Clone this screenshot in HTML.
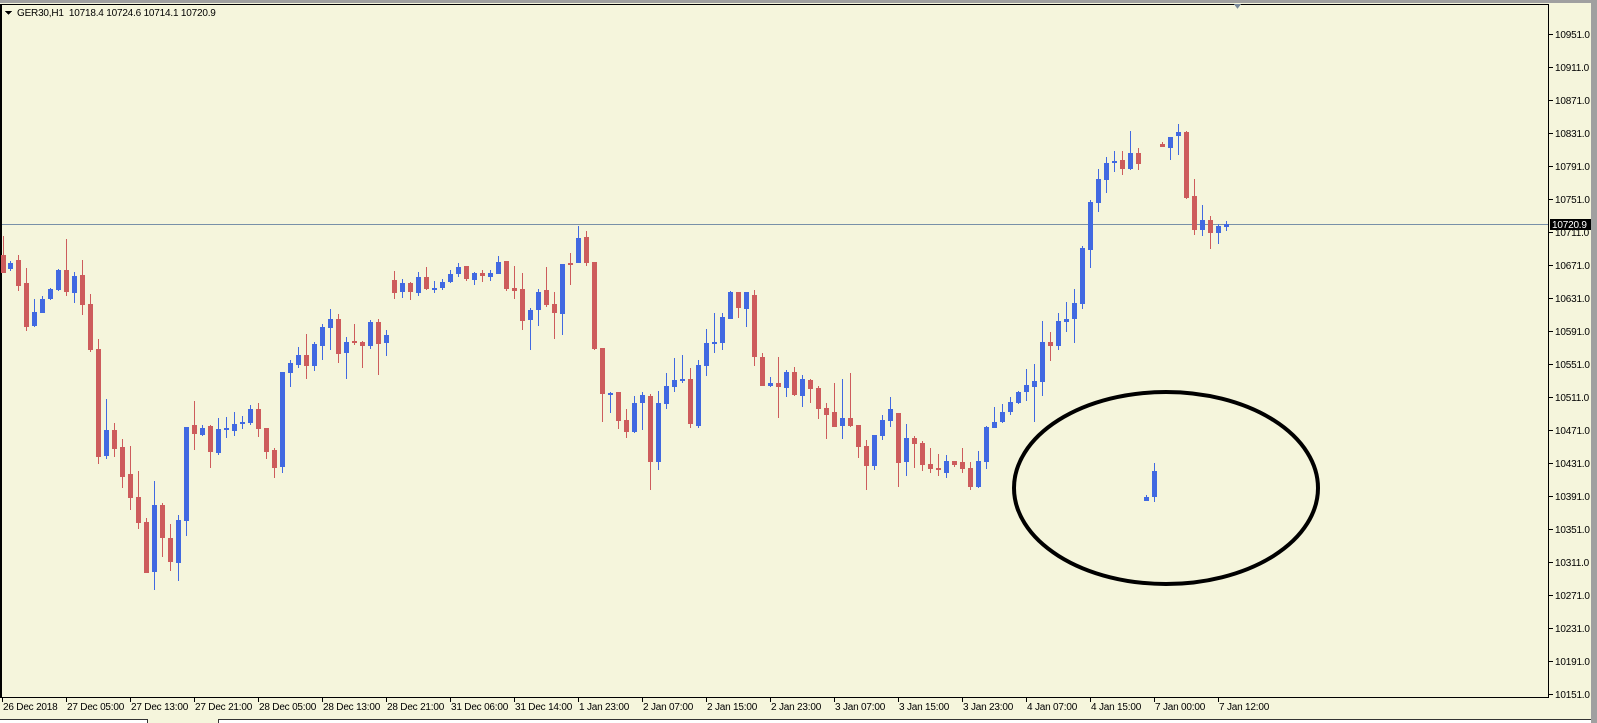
<!DOCTYPE html>
<html><head><meta charset="utf-8">
<style>
html,body{margin:0;padding:0;width:1597px;height:723px;overflow:hidden;background:#F5F5DC;}
svg{display:block;font-family:"Liberation Sans",sans-serif;font-size:10px;letter-spacing:-0.2px;}
</style></head>
<body>
<svg width="1597" height="723" viewBox="0 0 1597 723" xmlns="http://www.w3.org/2000/svg" shape-rendering="crispEdges">
<rect x="0" y="0" width="1597" height="723" fill="#F5F5DC"/>
<rect x="0" y="0" width="1597" height="3" fill="#A0A0A0"/>
<rect x="1591" y="0" width="6" height="723" fill="#A0A0A0"/>
<rect x="0" y="4" width="1549" height="1" fill="#000"/>
<rect x="0" y="4" width="2" height="694" fill="#000"/>
<rect x="1548" y="4" width="1" height="694" fill="#000"/>
<rect x="0" y="697" width="1549" height="1" fill="#000"/>
<polygon points="1234,4 1241,4 1237.5,9" fill="#7A8A9A"/>
<polygon points="5,11 12,11 8.5,15" fill="#000"/>
<text x="17" y="16" fill="#000">GER30,H1&#160; 10718.4 10724.6 10714.1 10720.9</text>
<rect x="2" y="224" width="1546" height="1" fill="#7890A8"/>
<g id="candles"></g>
<g id="price"></g>
<g id="time"></g>
<ellipse cx="1166" cy="488" rx="152" ry="96" fill="none" stroke="#000" stroke-width="4" shape-rendering="auto"/>
<rect x="1550" y="219" width="41" height="11" fill="#000"/>
<text x="1552" y="228" fill="#fff">10720.9</text>
<rect x="0" y="719" width="148" height="4" fill="#fff"/>
<rect x="0" y="719" width="148" height="1" fill="#333"/>
<rect x="147" y="719" width="1" height="4" fill="#333"/>
<rect x="218" y="719" width="1373" height="4" fill="#fff"/>
<rect x="218" y="719" width="1373" height="1" fill="#333"/>
<rect x="218" y="719" width="1" height="4" fill="#333"/>
</svg>
<script>
var D=[
[0,'r',255,273,236,273],[1,'b',263,269,261,271],[2,'r',260,286,255,291],[3,'r',283,327,268,331],[4,'b',312,326,299,327],[5,'b',299,313,296,313],[6,'b',289,299,288,300],[7,'b',270,290,269,291],[8,'r',270,292,239,296],[9,'b',276,293,272,303],[10,'r',275,305,260,315],[11,'r',304,350,294,352],[12,'r',349,457,339,464],[13,'b',430,456,399,459],[14,'r',430,449,423,457],[15,'r',447,477,439,488],[16,'r',474,498,446,510],[17,'r',497,523,471,529],[18,'r',522,573,518,573],[19,'b',505,572,481,590],[20,'r',505,538,503,557],[21,'r',538,562,524,571],[22,'b',520,563,515,581],[23,'b',427,521,427,536],[24,'r',425,434,401,450],[25,'b',428,435,425,436],[26,'r',426,452,425,468],[27,'b',429,453,418,455],[28,'b',428,430,417,438],[29,'b',424,431,412,436],[30,'b',422,424,416,429],[31,'b',409,423,405,425],[32,'r',409,429,403,437],[33,'r',428,452,428,459],[34,'r',450,468,448,478],[35,'b',372,467,372,473],[36,'b',363,373,360,387],[37,'b',355,365,347,368],[38,'r',355,366,334,379],[39,'b',344,366,342,371],[40,'b',327,346,324,360],[41,'b',319,328,309,350],[42,'r',319,354,314,363],[43,'b',342,353,337,379],[44,'r',341,343,324,345],[45,'r',342,346,341,368],[46,'b',322,346,320,349],[47,'r',322,344,319,375],[48,'b',335,343,330,356],[49,'r',280,293,271,299],[50,'b',283,292,279,298],[51,'r',283,292,282,300],[52,'b',277,293,272,296],[53,'r',277,289,267,290],[54,'b',288,289,281,293],[55,'b',282,288,279,290],[56,'b',274,282,270,283],[57,'b',267,274,263,277],[58,'r',266,279,266,281],[59,'b',273,280,272,285],[60,'r',273,276,270,282],[61,'b',273,277,270,281],[62,'b',262,274,256,274],[63,'r',261,289,261,291],[64,'r',288,291,266,299],[65,'r',289,321,273,330],[66,'b',310,320,308,350],[67,'b',292,310,289,326],[68,'r',290,305,267,307],[69,'r',304,313,292,339],[70,'b',264,314,264,335],[71,'r',263,265,253,285],[72,'b',238,263,226,263],[73,'r',237,263,231,266],[74,'r',262,349,262,350],[75,'r',348,394,348,422],[76,'b',393,394,392,413],[77,'r',392,421,392,429],[78,'r',420,432,409,438],[79,'b',403,432,396,433],[80,'b',395,403,392,430],[81,'r',396,462,394,490],[82,'b',403,462,391,470],[83,'b',386,404,373,409],[84,'b',380,387,358,392],[85,'b',379,381,355,383],[86,'r',379,424,368,428],[87,'b',365,426,360,428],[88,'b',343,366,329,376],[89,'b',342,344,313,353],[90,'b',317,343,313,350],[91,'b',292,319,291,319],[92,'r',292,308,292,318],[93,'b',292,309,292,327],[94,'r',295,357,290,366],[95,'r',357,386,353,386],[96,'b',383,386,377,387],[97,'r',383,387,357,418],[98,'b',372,388,370,397],[99,'r',372,395,367,396],[100,'b',379,396,375,407],[101,'r',380,389,379,403],[102,'r',388,409,386,419],[103,'r',408,415,403,439],[104,'r',412,427,383,427],[105,'b',418,426,379,439],[106,'r',418,426,373,427],[107,'r',425,447,425,458],[108,'r',446,466,440,490],[109,'b',435,466,435,470],[110,'b',420,436,415,440],[111,'b',409,421,397,427],[112,'r',413,463,413,487],[113,'b',438,462,424,476],[114,'r',438,444,436,468],[115,'r',443,465,441,471],[116,'r',464,469,448,473],[117,'r',468,470,454,476],[118,'b',461,473,455,478],[119,'r',461,465,461,467],[120,'r',462,469,448,473],[121,'r',468,487,462,490],[122,'b',461,487,451,488],[123,'b',427,462,426,469],[124,'b',422,428,407,428],[125,'b',412,422,404,423],[126,'b',402,412,397,415],[127,'b',392,403,391,404],[128,'b',385,392,369,401],[129,'b',381,387,364,422],[130,'b',342,382,321,396],[131,'r',342,346,332,361],[132,'b',321,346,313,350],[133,'b',319,322,302,332],[134,'b',303,319,289,343],[135,'b',248,304,246,309],[136,'b',202,250,200,268],[137,'b',179,203,169,212],[138,'b',163,180,157,193],[139,'b',161,163,151,172],[140,'r',160,169,151,175],[141,'b',153,169,131,170],[142,'r',153,164,148,170],[143,'b',497,501,495,501],[144,'b',471,497,463,502],[145,'r',144,147,142,147],[146,'b',137,148,137,160],[147,'b',132,136,124,155],[148,'r',132,198,131,199],[149,'r',196,230,179,235],[150,'b',220,230,205,236],[151,'r',220,233,216,249],[152,'b',226,233,224,244],[153,'b',224,227,221,231]
];
var ns="http://www.w3.org/2000/svg";
function R(g,x,y,w,h,f){var r=document.createElementNS(ns,'rect');r.setAttribute('x',x);r.setAttribute('y',y);r.setAttribute('width',w);r.setAttribute('height',h);r.setAttribute('fill',f);g.appendChild(r);}
function T(g,x,y,s){var t=document.createElementNS(ns,'text');t.setAttribute('x',x);t.setAttribute('y',y);t.setAttribute('fill','#000');t.textContent=s;g.appendChild(t);}
var g=document.getElementById('candles');
D.forEach(function(d){var k=d[0],c=d[1]=='r'?'#CD5C5C':'#4169E1';var bx=k==0?1:8*k;
R(g,bx+2,d[4],1,Math.max(d[5]-d[4],1),c);R(g,bx,d[2],5,Math.max(d[3]-d[2],2),c);});
var p=document.getElementById('price');
for(var i=0;i<=20;i++){var v=10951-40*i;var y=Math.round(34+(10951-v)*0.825);R(p,1549,y,4,1,'#000');T(p,1555,y+4,v+'.0');}
var tl=['26 Dec 2018','27 Dec 05:00','27 Dec 13:00','27 Dec 21:00','28 Dec 05:00','28 Dec 13:00','28 Dec 21:00','31 Dec 06:00','31 Dec 14:00','1 Jan 23:00','2 Jan 07:00','2 Jan 15:00','2 Jan 23:00','3 Jan 07:00','3 Jan 15:00','3 Jan 23:00','4 Jan 07:00','4 Jan 15:00','7 Jan 00:00','7 Jan 12:00'];
var tg=document.getElementById('time');
tl.forEach(function(s,i){var x=2+64*i;R(tg,x,697,1,5,'#000');T(tg,x+1,710,s);});
</script>
</body></html>
